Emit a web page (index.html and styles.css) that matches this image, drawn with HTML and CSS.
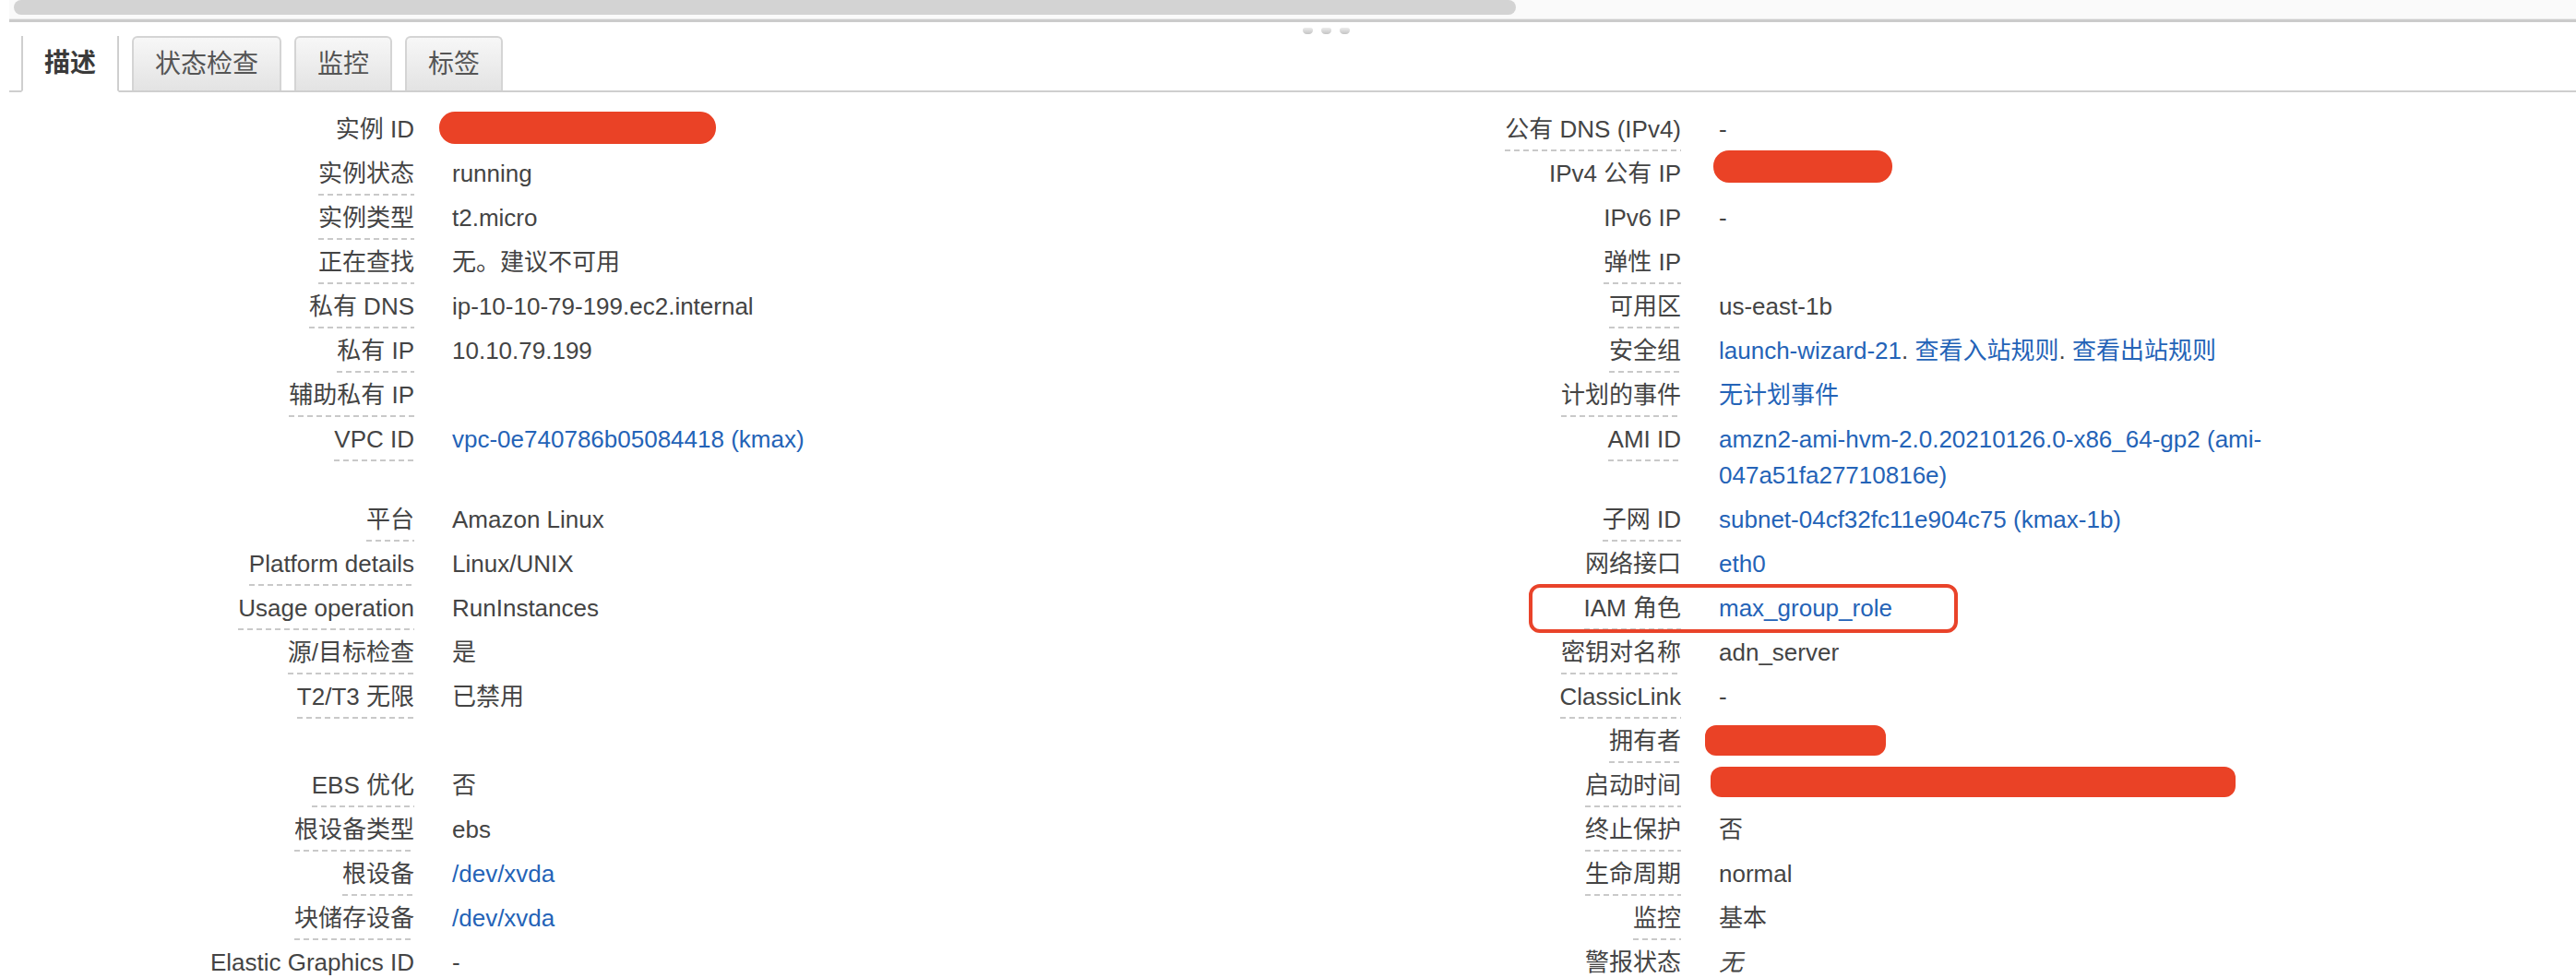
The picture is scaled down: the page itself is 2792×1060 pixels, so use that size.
FILE: index.html
```html
<!DOCTYPE html>
<html lang="zh-CN">
<head>
<meta charset="utf-8">
<title>实例描述</title>
<link rel="stylesheet" href="styles.css">
</head>
<body>
<div class="pane">
  <div class="track"><div class="thumb"></div></div>
  <div class="rule"></div>
  <div class="grip"><i></i><i></i><i></i></div>
  <div class="tabs">
    <div class="tab active">描述</div>
    <div class="tab">状态检查</div>
    <div class="tab">监控</div>
    <div class="tab">标签</div>
  </div>
  <div class="details">
    <!-- row 0 -->
    <div class="lbl"><span class="k nd">实例 ID</span></div>
    <div class="val"><span class="redact r-id"></span></div>
    <div class="lbl"><span class="k">公有 DNS (IPv4)</span></div>
    <div class="val">-</div>
    <!-- row 1 -->
    <div class="lbl"><span class="k">实例状态</span></div>
    <div class="val">running</div>
    <div class="lbl"><span class="k nd">IPv4 公有 IP</span></div>
    <div class="val"><span class="redact r-ip"></span></div>
    <!-- row 2 -->
    <div class="lbl"><span class="k">实例类型</span></div>
    <div class="val">t2.micro</div>
    <div class="lbl"><span class="k nd">IPv6 IP</span></div>
    <div class="val">-</div>
    <!-- row 3 -->
    <div class="lbl"><span class="k">正在查找</span></div>
    <div class="val">无。建议不可用</div>
    <div class="lbl"><span class="k">弹性 IP</span></div>
    <div class="val"></div>
    <!-- row 4 -->
    <div class="lbl"><span class="k">私有 DNS</span></div>
    <div class="val">ip-10-10-79-199.ec2.internal</div>
    <div class="lbl"><span class="k">可用区</span></div>
    <div class="val">us-east-1b</div>
    <!-- row 5 -->
    <div class="lbl"><span class="k">私有 IP</span></div>
    <div class="val">10.10.79.199</div>
    <div class="lbl"><span class="k">安全组</span></div>
    <div class="val"><a href="#">launch-wizard-21</a>. <a href="#">查看入站规则</a>. <a href="#">查看出站规则</a></div>
    <!-- row 6 -->
    <div class="lbl"><span class="k">辅助私有 IP</span></div>
    <div class="val"></div>
    <div class="lbl"><span class="k">计划的事件</span></div>
    <div class="val"><a href="#">无计划事件</a></div>
    <!-- row 7 -->
    <div class="lbl"><span class="k">VPC ID</span></div>
    <div class="val"><a href="#">vpc-0e740786b05084418 (kmax)</a></div>
    <div class="lbl"><span class="k">AMI ID</span></div>
    <div class="val tall"><a href="#">amzn2-ami-hvm-2.0.20210126.0-x86_64-gp2 (ami-<wbr>047a51fa27710816e)</a></div>
    <!-- row 8 -->
    <div class="lbl"><span class="k">平台</span></div>
    <div class="val">Amazon Linux</div>
    <div class="lbl"><span class="k">子网 ID</span></div>
    <div class="val"><a href="#">subnet-04cf32fc11e904c75 (kmax-1b)</a></div>
    <!-- row 9 -->
    <div class="lbl"><span class="k">Platform details</span></div>
    <div class="val">Linux/UNIX</div>
    <div class="lbl"><span class="k nd">网络接口</span></div>
    <div class="val"><a href="#">eth0</a></div>
    <!-- row 10 -->
    <div class="lbl"><span class="k">Usage operation</span></div>
    <div class="val">RunInstances</div>
    <div class="lbl hl-cell"><span class="k">IAM 角色</span><span class="hl"></span></div>
    <div class="val"><a href="#">max_group_role</a></div>
    <!-- row 11 -->
    <div class="lbl"><span class="k">源/目标检查</span></div>
    <div class="val">是</div>
    <div class="lbl"><span class="k">密钥对名称</span></div>
    <div class="val">adn_server</div>
    <!-- row 12 -->
    <div class="lbl"><span class="k">T2/T3 无限</span></div>
    <div class="val">已禁用</div>
    <div class="lbl"><span class="k">ClassicLink</span></div>
    <div class="val">-</div>
    <!-- row 13 -->
    <div class="lbl"></div>
    <div class="val"></div>
    <div class="lbl"><span class="k">拥有者</span></div>
    <div class="val"><span class="redact r-owner"></span></div>
    <!-- row 14 -->
    <div class="lbl"><span class="k">EBS 优化</span></div>
    <div class="val">否</div>
    <div class="lbl"><span class="k">启动时间</span></div>
    <div class="val"><span class="redact r-time"></span></div>
    <!-- row 15 -->
    <div class="lbl"><span class="k">根设备类型</span></div>
    <div class="val">ebs</div>
    <div class="lbl"><span class="k">终止保护</span></div>
    <div class="val">否</div>
    <!-- row 16 -->
    <div class="lbl"><span class="k">根设备</span></div>
    <div class="val"><a href="#">/dev/xvda</a></div>
    <div class="lbl"><span class="k">生命周期</span></div>
    <div class="val">normal</div>
    <!-- row 17 -->
    <div class="lbl"><span class="k">块储存设备</span></div>
    <div class="val"><a href="#">/dev/xvda</a></div>
    <div class="lbl"><span class="k">监控</span></div>
    <div class="val">基本</div>
    <!-- row 18 -->
    <div class="lbl"><span class="k">Elastic Graphics ID</span></div>
    <div class="val">-</div>
    <div class="lbl"><span class="k">警报状态</span></div>
    <div class="val"><em class="none">无</em></div>
  </div>
</div>
</body>
</html>
```

FILE: styles.css
```css
html {
  overflow: hidden;
}

body {
  margin: 0;
  background: #ffffff;
  font-family: "Liberation Sans", "Noto Sans CJK SC", sans-serif;
  color: #444444;
}

.pane {
  margin-left: 10px;
  position: relative;
}

.track {
  height: 20px;
  background: #fafafa;
}

.thumb {
  margin-left: 5px;
  width: 1628px;
  height: 16px;
  background: #d3d3d3;
  border-radius: 8px;
}

.rule {
  height: 3px;
  border-top: 1px solid #e9e9e9;
  background: #cbcbcb;
}

.grip {
  position: absolute;
  top: 30px;
  left: 1402px;
  display: flex;
  gap: 9px;
}

.grip i {
  display: block;
  width: 11px;
  height: 7px;
  border-radius: 3px 3px 5px 5px;
  background: linear-gradient(#ececec, #c4c4c4);
}

.tabs {
  display: flex;
  align-items: flex-end;
  gap: 14px;
  padding: 15px 0 0 13px;
  border-bottom: 2px solid #cfcfcf;
}

.tab {
  box-sizing: border-box;
  height: 59px;
  padding: 0 23px;
  font-size: 28px;
  line-height: 57px;
  color: #555555;
  border: 2px solid #d4d4d4;
  border-bottom: 0;
  border-radius: 6px 6px 0 0;
  background: linear-gradient(#f7f7f7, #e3e3e3);
}

.tab.active {
  height: 61px;
  margin-bottom: -2px;
  line-height: 59px;
  font-weight: bold;
  color: #3a3a3a;
  background: #ffffff;
  border-top: 0;
  border-bottom: 2px solid #ffffff;
  border-left-color: #cfcfcf;
  border-right-color: #cfcfcf;
  border-radius: 0;
}

.details {
  display: grid;
  grid-template-columns: 426px 865px 426px 640px;
  column-gap: 41px;
  padding: 17px 0 0 13px;
  font-size: 26px;
}

.lbl {
  text-align: right;
  padding: 4px 0 1px;
  line-height: 39px;
}

.k {
  display: inline-block;
  vertical-align: top;
  padding-bottom: 4px;
  white-space: nowrap;
  background: repeating-linear-gradient(90deg, #c9c9c9 0 6px, transparent 6px 10px) left bottom / 100% 2px no-repeat;
}

.k.nd {
  background: none;
}

.val {
  padding: 4px 0 2px;
  line-height: 39px;
}

.val.tall {
  padding-bottom: 5px;
}

.val a {
  color: #2463b7;
  text-decoration: none;
}

.none {
  font-style: italic;
}

.redact {
  display: block;
  background: #ea4226;
}

.r-id {
  width: 300px;
  height: 35px;
  border-radius: 17px;
  margin: 0 0 0 -14px;
}

.r-ip {
  width: 194px;
  height: 35px;
  border-radius: 17px;
  margin: -6px 0 0 -6px;
}

.r-owner {
  width: 196px;
  height: 33px;
  border-radius: 12px;
  margin: 2px 0 0 -15px;
}

.r-time {
  width: 569px;
  height: 33px;
  border-radius: 12px;
  margin: -1px 0 0 -9px;
}

.hl-cell {
  position: relative;
}

.hl {
  position: absolute;
  left: 261px;
  top: -3px;
  box-sizing: border-box;
  width: 465px;
  height: 53px;
  border: 4px solid #e9432a;
  border-radius: 12px;
}
```
